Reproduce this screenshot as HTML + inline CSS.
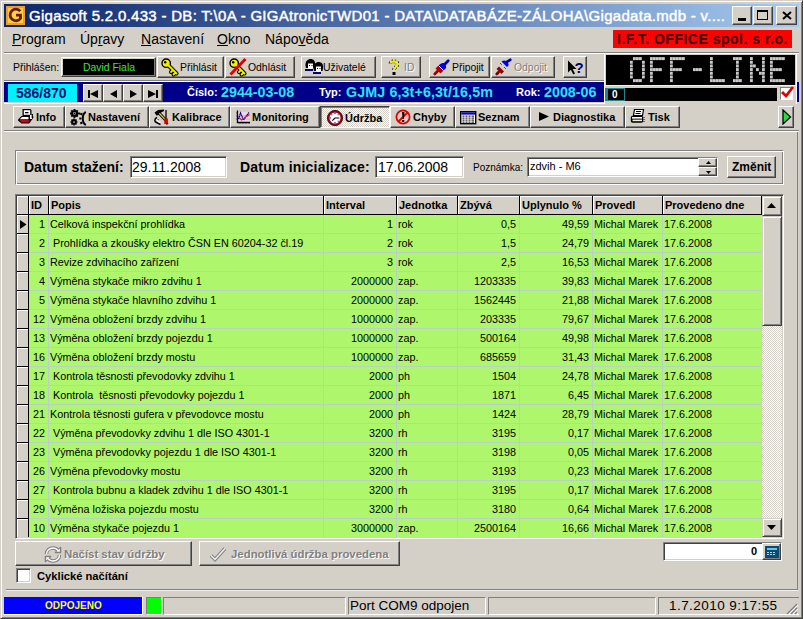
<!DOCTYPE html>
<html><head><meta charset="utf-8">
<style>
*{box-sizing:border-box;margin:0;padding:0}
html,body{width:803px;height:619px;overflow:hidden;background:#D4D0C8;font-family:"Liberation Sans",sans-serif;font-size:11px;color:#000}
.a{position:absolute}
svg.a{overflow:visible}
.r{position:absolute;background:#D4D0C8;border:1px solid;border-color:#fff #404040 #404040 #fff;box-shadow:inset -1px -1px #808080}
.s{position:absolute;background:#fff;border:1px solid;border-color:#808080 #fff #fff #808080;box-shadow:inset 1px 1px #404040,inset -1px -1px #D4D0C8}
.t{position:absolute;white-space:nowrap;line-height:1}
.b{font-weight:bold}
.tb{font-size:10.4px;top:63px}
.dis{color:#808080;text-shadow:1px 1px #fff}
.tab{position:absolute;top:106px;height:22px;background:#D4D0C8;border:1px solid;border-color:#fff #404040 #404040 #fff;box-shadow:inset -1px -1px #808080}
.tab span{position:absolute;top:5px;font-weight:bold;font-size:11px;white-space:nowrap;line-height:1}
.tab svg{position:absolute}
.sp{position:absolute;top:597px;height:17px;border:1px solid;border-color:#808080 #fff #fff #808080}
</style></head><body>
<!-- window frame -->
<div class="a" style="left:0;top:0;width:803px;height:619px;border:1px solid;border-color:#D4D0C8 #404040 #404040 #D4D0C8;box-shadow:inset 1px 1px #fff,inset -1px -1px #808080"></div>
<!-- title bar -->
<div class="a" style="left:4px;top:4px;width:795px;height:23px;background:linear-gradient(to right,#0A246A,#A6CAF0)"></div>
<svg class="a" style="left:5px;top:5px" width="21" height="21" viewBox="0 0 21 21">
<rect x="0.5" y="0.5" width="20" height="20" fill="#F39A2A" stroke="#5A1208"/>
<rect x="3" y="3" width="15" height="15" fill="#FFD040"/>
<path d="M15.3 6.2 A5.8 5.8 0 1 0 15.5 13.5 L15.5 10.2 L11 10.2" fill="none" stroke="#6A1A10" stroke-width="2.8"/>
</svg>
<div class="t" style="left:29px;top:8px;font-size:15px;letter-spacing:.3px;-webkit-text-stroke:.45px #fff;color:#fff">Gigasoft 5.2.0.433 - DB: T:\0A - GIGAtronicTWD01 - DATA\DATABÁZE-ZÁLOHA\Gigadata.mdb - v....</div>
<div class="r" style="left:732px;top:6px;width:20px;height:19px"><div class="a" style="left:5px;top:11px;width:8px;height:3px;background:#000"></div></div>
<div class="r" style="left:753px;top:6px;width:20px;height:19px"><div class="a" style="left:3px;top:3px;width:11px;height:10px;border:1px solid #000;border-top-width:2px"></div></div>
<div class="r" style="left:776px;top:6px;width:21px;height:19px"><svg class="a" style="left:5px;top:4px" width="10" height="9"><path d="M1 1L9 8M9 1L1 8" stroke="#000" stroke-width="2"/></svg></div>

<!-- menu -->
<div class="t" style="left:12px;top:32px;font-size:14px"><u>P</u>rogram</div>
<div class="t" style="left:80px;top:32px;font-size:14px">Úp<u>r</u>avy</div>
<div class="t" style="left:141px;top:32px;font-size:14px"><u>N</u>astavení</div>
<div class="t" style="left:217px;top:32px;font-size:14px"><u>O</u>kno</div>
<div class="t" style="left:265px;top:32px;font-size:14px">Nápo<u>v</u>ěda</div>
<div class="a" style="left:613px;top:30px;width:179px;height:18px;background:#FF0000"></div>
<div class="t b" style="left:617px;top:32px;font-size:14px;letter-spacing:.5px;color:#3A0000">I.F.T. OFFICE spol. s r.o.</div>
<div class="a" style="left:4px;top:52px;width:795px;height:1px;background:#808080"></div>
<div class="a" style="left:4px;top:53px;width:795px;height:1px;background:#fff"></div>

<!-- toolbar row -->
<div class="t tb" style="left:13px">Přihlášen:</div>
<div class="a" style="left:61px;top:57px;width:95px;height:20px;border:1px solid;border-color:#fff #404040 #404040 #fff;box-shadow:inset -1px -1px #808080,inset 1px 1px #D4D0C8;background:#000"></div>
<div class="t tb" style="left:83px;color:#40E040">David Fiala</div>

<div class="r" style="left:157px;top:56px;width:67px;height:22px"></div>
<svg class="a" style="left:161px;top:58px" width="18" height="17"><g stroke-linecap="round" stroke-linejoin="round"><path d="M6 6L15.5 15.5M12 12L10 14M14.5 14.5L12.5 16.5" stroke="#000" stroke-width="4"/><circle cx="5.2" cy="5.2" r="4.2" fill="#F0F000" stroke="#000" stroke-width="1.4"/><path d="M6 6L15.5 15.5M12 12L10 14M14.5 14.5L12.5 16.5" stroke="#F0F000" stroke-width="1.8"/><circle cx="4.2" cy="4.2" r="1.2" fill="#000"/></g></svg>
<div class="t tb" style="left:180px">Přihlásit</div>
<div class="r" style="left:225px;top:56px;width:70px;height:22px"></div>
<svg class="a" style="left:229px;top:58px" width="18" height="17"><g stroke-linecap="round" stroke-linejoin="round"><path d="M6 6L15.5 15.5M12 12L10 14M14.5 14.5L12.5 16.5" stroke="#000" stroke-width="4"/><circle cx="5.2" cy="5.2" r="4.2" fill="#F0F000" stroke="#000" stroke-width="1.4"/><path d="M6 6L15.5 15.5M12 12L10 14M14.5 14.5L12.5 16.5" stroke="#F0F000" stroke-width="1.8"/><circle cx="4.2" cy="4.2" r="1.2" fill="#000"/></g><path d="M16.5 1L1.5 16.5" stroke="#E00000" stroke-width="3"/></svg>
<div class="t tb" style="left:248px">Odhlásit</div>
<div class="r" style="left:301px;top:56px;width:75px;height:22px"></div>
<svg class="a" style="left:305px;top:59px" width="18" height="16"><g><path d="M0.5 7C0 2 3 0 5.5 0C8.5 0 10.5 2 10 6L9.5 9H1Z" fill="#000"/><path d="M3 4.5H8V8.5L6.5 10H4L3 9Z" fill="#fff"/><rect x="4" y="6" width="1" height="1" fill="#000"/><rect x="6.5" y="6" width="1" height="1" fill="#000"/><rect x="0" y="10" width="8" height="2" fill="#000070"/></g><g transform="translate(8 3)"><path d="M0.5 7C0 2 3 0 5.5 0C8.5 0 10.5 2 10 6L9.5 9H1Z" fill="#000"/><path d="M3 4.5H8V8.5L6.5 10H4L3 9Z" fill="#fff"/><rect x="4" y="6" width="1" height="1" fill="#000"/><rect x="6.5" y="6" width="1" height="1" fill="#000"/><rect x="0" y="10" width="8" height="2" fill="#000070"/></g></svg>
<div class="t tb" style="left:323px">Uživatelé</div>
<div class="r" style="left:381px;top:56px;width:40px;height:22px"></div>
<svg class="a" style="left:388px;top:59px" width="12" height="17"><path d="M2.5 4.5C2.5 1.5 9.5 1.5 9.5 5C9.5 8 6 8 6 11" fill="none" stroke="#000" stroke-width="3.6" stroke-dasharray="1.2 1.3"/><path d="M2.5 4.5C2.5 1.5 9.5 1.5 9.5 5C9.5 8 6 8 6 11" fill="none" stroke="#F0F000" stroke-width="2.2"/><rect x="4.5" y="13" width="3" height="3" fill="#000"/></svg>
<div class="t tb dis" style="left:404px">ID</div>
<div class="r" style="left:429px;top:56px;width:61px;height:22px"></div>
<svg class="a" style="left:433px;top:59px" width="17" height="17"><path d="M1.8 15L5 11.8" stroke="#A00000" stroke-width="2.8" stroke-linecap="round"/><path d="M2.5 9.5L7.5 14.5L10.5 11.5L5.5 6.5Z" fill="#B00000"/><path d="M5.5 6.5L10.5 11.5L12.8 9.2C13.8 7.8 12.5 5 11 4.3C9.5 3.3 7.8 4.2 5.5 6.5Z" fill="#0000F0"/><path d="M5.5 6.5L10.5 11.5" stroke="#fff" stroke-width=".9"/><path d="M11.8 5.2L15.2 1.8" stroke="#0000B0" stroke-width="2.8" stroke-linecap="round"/></svg>
<div class="t tb" style="left:452px">Připojit</div>
<div class="r" style="left:491px;top:56px;width:64px;height:22px"></div>
<svg class="a" style="left:495px;top:59px" width="17" height="17"><path d="M1.8 15L3.5 13.3" stroke="#800000" stroke-width="2.8" stroke-linecap="round"/><path d="M1.5 10L6.5 15L9 12.5L4 7.5Z" fill="#900000"/><path d="M6.5 2.5L12 8L13.3 6.7C14.2 5.3 13 3 11.5 2.2C10 1.3 8.3 1.2 6.5 2.5Z" fill="#0000F0"/><path d="M12.3 2.7L15.2 0.8" stroke="#0000B0" stroke-width="2.8" stroke-linecap="round"/><path d="M5 4L7 6M9 8L11 10" stroke="#0000F0" stroke-width="1" stroke-dasharray="1 1"/></svg>
<div class="t tb dis" style="left:514px">Odpojit</div>
<div class="r" style="left:563px;top:56px;width:24px;height:22px"></div>
<svg class="a" style="left:567px;top:60px" width="18" height="16"><path d="M1 0.5V12.5L3.8 9.8L6.3 14.5L8 13.6L5.6 9H9.5Z" fill="#000"/><text x="7.5" y="13" font-family="Liberation Sans" font-weight="bold" font-size="15" fill="#000070">?</text></svg>

<!-- OFF-LINE display -->
<div class="a" style="left:604px;top:54px;width:193px;height:50px;background:#D4D0C8;border-left:1px solid #fff;border-right:1px solid #fff"></div>
<div class="a" style="left:606px;top:55px;width:189px;height:30px;background:#000"></div>
<div class="a" style="left:605px;top:85px;width:191px;height:1px;background:#F0F0F0"></div>
<svg class="a" style="left:605px;top:54px" width="191" height="31"><rect x="28" y="3.10" width="2.8" height="3" fill="#C8C8C8"/><rect x="31" y="3.10" width="2.8" height="3" fill="#C8C8C8"/><rect x="34" y="3.10" width="2.8" height="3" fill="#C8C8C8"/><rect x="25" y="6.77" width="2.8" height="3" fill="#C8C8C8"/><rect x="37" y="6.77" width="2.8" height="3" fill="#C8C8C8"/><rect x="25" y="10.44" width="2.8" height="3" fill="#C8C8C8"/><rect x="37" y="10.44" width="2.8" height="3" fill="#C8C8C8"/><rect x="25" y="14.11" width="2.8" height="3" fill="#C8C8C8"/><rect x="37" y="14.11" width="2.8" height="3" fill="#C8C8C8"/><rect x="25" y="17.78" width="2.8" height="3" fill="#C8C8C8"/><rect x="37" y="17.78" width="2.8" height="3" fill="#C8C8C8"/><rect x="25" y="21.45" width="2.8" height="3" fill="#C8C8C8"/><rect x="37" y="21.45" width="2.8" height="3" fill="#C8C8C8"/><rect x="28" y="25.12" width="2.8" height="3" fill="#C8C8C8"/><rect x="31" y="25.12" width="2.8" height="3" fill="#C8C8C8"/><rect x="34" y="25.12" width="2.8" height="3" fill="#C8C8C8"/><rect x="45" y="3.10" width="2.8" height="3" fill="#C8C8C8"/><rect x="48" y="3.10" width="2.8" height="3" fill="#C8C8C8"/><rect x="51" y="3.10" width="2.8" height="3" fill="#C8C8C8"/><rect x="54" y="3.10" width="2.8" height="3" fill="#C8C8C8"/><rect x="57" y="3.10" width="2.8" height="3" fill="#C8C8C8"/><rect x="45" y="6.77" width="2.8" height="3" fill="#C8C8C8"/><rect x="45" y="10.44" width="2.8" height="3" fill="#C8C8C8"/><rect x="45" y="14.11" width="2.8" height="3" fill="#C8C8C8"/><rect x="48" y="14.11" width="2.8" height="3" fill="#C8C8C8"/><rect x="51" y="14.11" width="2.8" height="3" fill="#C8C8C8"/><rect x="54" y="14.11" width="2.8" height="3" fill="#C8C8C8"/><rect x="45" y="17.78" width="2.8" height="3" fill="#C8C8C8"/><rect x="45" y="21.45" width="2.8" height="3" fill="#C8C8C8"/><rect x="45" y="25.12" width="2.8" height="3" fill="#C8C8C8"/><rect x="65" y="3.10" width="2.8" height="3" fill="#C8C8C8"/><rect x="68" y="3.10" width="2.8" height="3" fill="#C8C8C8"/><rect x="71" y="3.10" width="2.8" height="3" fill="#C8C8C8"/><rect x="74" y="3.10" width="2.8" height="3" fill="#C8C8C8"/><rect x="77" y="3.10" width="2.8" height="3" fill="#C8C8C8"/><rect x="65" y="6.77" width="2.8" height="3" fill="#C8C8C8"/><rect x="65" y="10.44" width="2.8" height="3" fill="#C8C8C8"/><rect x="65" y="14.11" width="2.8" height="3" fill="#C8C8C8"/><rect x="68" y="14.11" width="2.8" height="3" fill="#C8C8C8"/><rect x="71" y="14.11" width="2.8" height="3" fill="#C8C8C8"/><rect x="74" y="14.11" width="2.8" height="3" fill="#C8C8C8"/><rect x="65" y="17.78" width="2.8" height="3" fill="#C8C8C8"/><rect x="65" y="21.45" width="2.8" height="3" fill="#C8C8C8"/><rect x="65" y="25.12" width="2.8" height="3" fill="#C8C8C8"/><rect x="88" y="14.11" width="2.8" height="3" fill="#C8C8C8"/><rect x="91" y="14.11" width="2.8" height="3" fill="#C8C8C8"/><rect x="94" y="14.11" width="2.8" height="3" fill="#C8C8C8"/><rect x="105" y="3.10" width="2.8" height="3" fill="#C8C8C8"/><rect x="105" y="6.77" width="2.8" height="3" fill="#C8C8C8"/><rect x="105" y="10.44" width="2.8" height="3" fill="#C8C8C8"/><rect x="105" y="14.11" width="2.8" height="3" fill="#C8C8C8"/><rect x="105" y="17.78" width="2.8" height="3" fill="#C8C8C8"/><rect x="105" y="21.45" width="2.8" height="3" fill="#C8C8C8"/><rect x="105" y="25.12" width="2.8" height="3" fill="#C8C8C8"/><rect x="108" y="25.12" width="2.8" height="3" fill="#C8C8C8"/><rect x="111" y="25.12" width="2.8" height="3" fill="#C8C8C8"/><rect x="114" y="25.12" width="2.8" height="3" fill="#C8C8C8"/><rect x="117" y="25.12" width="2.8" height="3" fill="#C8C8C8"/><rect x="128" y="3.10" width="2.8" height="3" fill="#C8C8C8"/><rect x="131" y="3.10" width="2.8" height="3" fill="#C8C8C8"/><rect x="134" y="3.10" width="2.8" height="3" fill="#C8C8C8"/><rect x="131" y="6.77" width="2.8" height="3" fill="#C8C8C8"/><rect x="131" y="10.44" width="2.8" height="3" fill="#C8C8C8"/><rect x="131" y="14.11" width="2.8" height="3" fill="#C8C8C8"/><rect x="131" y="17.78" width="2.8" height="3" fill="#C8C8C8"/><rect x="131" y="21.45" width="2.8" height="3" fill="#C8C8C8"/><rect x="128" y="25.12" width="2.8" height="3" fill="#C8C8C8"/><rect x="131" y="25.12" width="2.8" height="3" fill="#C8C8C8"/><rect x="134" y="25.12" width="2.8" height="3" fill="#C8C8C8"/><rect x="145" y="3.10" width="2.8" height="3" fill="#C8C8C8"/><rect x="157" y="3.10" width="2.8" height="3" fill="#C8C8C8"/><rect x="145" y="6.77" width="2.8" height="3" fill="#C8C8C8"/><rect x="157" y="6.77" width="2.8" height="3" fill="#C8C8C8"/><rect x="145" y="10.44" width="2.8" height="3" fill="#C8C8C8"/><rect x="148" y="10.44" width="2.8" height="3" fill="#C8C8C8"/><rect x="157" y="10.44" width="2.8" height="3" fill="#C8C8C8"/><rect x="145" y="14.11" width="2.8" height="3" fill="#C8C8C8"/><rect x="151" y="14.11" width="2.8" height="3" fill="#C8C8C8"/><rect x="157" y="14.11" width="2.8" height="3" fill="#C8C8C8"/><rect x="145" y="17.78" width="2.8" height="3" fill="#C8C8C8"/><rect x="154" y="17.78" width="2.8" height="3" fill="#C8C8C8"/><rect x="157" y="17.78" width="2.8" height="3" fill="#C8C8C8"/><rect x="145" y="21.45" width="2.8" height="3" fill="#C8C8C8"/><rect x="157" y="21.45" width="2.8" height="3" fill="#C8C8C8"/><rect x="145" y="25.12" width="2.8" height="3" fill="#C8C8C8"/><rect x="157" y="25.12" width="2.8" height="3" fill="#C8C8C8"/><rect x="165" y="3.10" width="2.8" height="3" fill="#C8C8C8"/><rect x="168" y="3.10" width="2.8" height="3" fill="#C8C8C8"/><rect x="171" y="3.10" width="2.8" height="3" fill="#C8C8C8"/><rect x="174" y="3.10" width="2.8" height="3" fill="#C8C8C8"/><rect x="177" y="3.10" width="2.8" height="3" fill="#C8C8C8"/><rect x="165" y="6.77" width="2.8" height="3" fill="#C8C8C8"/><rect x="165" y="10.44" width="2.8" height="3" fill="#C8C8C8"/><rect x="165" y="14.11" width="2.8" height="3" fill="#C8C8C8"/><rect x="168" y="14.11" width="2.8" height="3" fill="#C8C8C8"/><rect x="171" y="14.11" width="2.8" height="3" fill="#C8C8C8"/><rect x="174" y="14.11" width="2.8" height="3" fill="#C8C8C8"/><rect x="165" y="17.78" width="2.8" height="3" fill="#C8C8C8"/><rect x="165" y="21.45" width="2.8" height="3" fill="#C8C8C8"/><rect x="165" y="25.12" width="2.8" height="3" fill="#C8C8C8"/><rect x="168" y="25.12" width="2.8" height="3" fill="#C8C8C8"/><rect x="171" y="25.12" width="2.8" height="3" fill="#C8C8C8"/><rect x="174" y="25.12" width="2.8" height="3" fill="#C8C8C8"/><rect x="177" y="25.12" width="2.8" height="3" fill="#C8C8C8"/></svg>

<!-- blue bar -->
<div class="a" style="left:4px;top:80px;width:600px;height:1px;background:#808080"></div>
<div class="a" style="left:4px;top:81px;width:600px;height:1px;background:#fff"></div>
<div class="a" style="left:4px;top:82px;width:600px;height:20px;background:#000088"></div>
<div class="a" style="left:4px;top:103px;width:600px;height:1px;background:#fff"></div>
<div class="a" style="left:797px;top:82px;width:2px;height:20px;background:#000088"></div>
<div class="a" style="left:8px;top:84px;width:69px;height:18px;background:#00F0FF"></div>
<div class="t b" style="left:16px;top:86px;font-size:14px;color:#001070">586/870</div>
<div class="r" style="left:83px;top:84px;width:20px;height:18px"><svg class="a" style="left:4px;top:5px" width="11" height="8"><rect x="0" y="0" width="2" height="8"/><path d="M2 4L10 0V8Z"/></svg></div>
<div class="r" style="left:103px;top:84px;width:20px;height:18px"><svg class="a" style="left:6px;top:5px" width="8" height="8"><path d="M0 4L7 0V8Z"/></svg></div>
<div class="r" style="left:123px;top:84px;width:20px;height:18px"><svg class="a" style="left:6px;top:5px" width="8" height="8"><path d="M7 4L0 0V8Z"/></svg></div>
<div class="r" style="left:143px;top:84px;width:20px;height:18px"><svg class="a" style="left:4px;top:5px" width="11" height="8"><rect x="8" y="0" width="2" height="8"/><path d="M8 4L0 0V8Z"/></svg></div>
<div class="t b" style="left:187px;top:87px;font-size:11px;color:#fff">Číslo:</div>
<div class="t b" style="left:221px;top:85px;font-size:14.3px;color:#30E0FF">2944-03-08</div>
<div class="t b" style="left:319px;top:87px;font-size:11px;color:#fff">Typ:</div>
<div class="t b" style="left:346px;top:85px;font-size:14.3px;letter-spacing:.1px;color:#30E0FF">GJMJ 6,3t+6,3t/16,5m</div>
<div class="t b" style="left:516px;top:87px;font-size:11px;color:#fff">Rok:</div>
<div class="t b" style="left:544px;top:85px;font-size:14.3px;color:#30E0FF">2008-06</div>
<div class="a" style="left:605px;top:88px;width:172px;height:13px;background:#000"></div>
<div class="a" style="left:605px;top:88px;width:20px;height:13px;border:1px solid #208888;border-left-width:3px"></div>
<div class="t b" style="left:612px;top:90px;font-size:10px;color:#fff">0</div>
<div class="a" style="left:780px;top:87px;width:13px;height:13px;background:#fff;border:1px solid;border-color:#808080 #fff #fff #808080"></div>
<svg class="a" style="left:781px;top:86px" width="13" height="13"><path d="M1 6L5 10L12 1" fill="none" stroke="#E00000" stroke-width="2.8"/></svg>

<!-- tabs -->
<div class="tab" style="left:13px;width:52px"><svg style="left:4px;top:2px" width="17" height="16"><path d="M0 10.5L3.5 7H15L15.5 8.5L12 13.5L11 14.5H3.5L0 11.5Z" fill="#000"/><path d="M4 8H10.5V10.2H1.8Z" fill="#fff"/><path d="M1.5 11H11.5L10.3 13.5H3.5Z" fill="#C8001A"/><path d="M4.5 0H12.5L13.5 1.5V7H4.5Z" fill="#000"/><path d="M5.8 1.2H12.2V5.8H5.8Z" fill="#fff"/><rect x="7" y="3" width="3.5" height="1.3" fill="#000"/><path d="M12 6H14V10H12Z" fill="#fff"/><path d="M14.3 5V9" stroke="#000" stroke-width="1.3"/></svg><span style="left:22px">Info</span></div>
<div class="tab" style="left:65px;width:84px"><svg style="left:4px;top:2px" width="17" height="17"><g fill="none" stroke="#000"><circle cx="4.5" cy="4.5" r="2.5" stroke-width="2.2"/><path d="M4.5 0V1.5M4.5 7.5V9M0 4.5H1.5M7.5 4.5H10M1.3 1.3L2.3 2.3M6.7 6.7L7.7 7.7M7.7 1.3L6.7 2.3M2.3 6.7L1.3 7.7" stroke-width="1.9"/><path d="M15.8 3C11.8 5 11.8 14 15.8 16" stroke-width="2"/><path d="M12.3 5.5L10.3 4.5M11.5 9.5H9.3M12.3 13.5L10.3 14.5" stroke-width="2"/><circle cx="4" cy="13" r="1.8" stroke-width="1.9"/><path d="M4 9.5V10.8M4 15.2V16.5M0.5 13H1.8M6.2 13H7.5M1.5 10.5L2.3 11.3M5.7 14.7L6.5 15.5M6.5 10.5L5.7 11.3M2.3 14.7L1.5 15.5" stroke-width="1.7"/></g><circle cx="4.5" cy="4.5" r=".9" fill="#000"/></svg><span style="left:22px">Nastavení</span></div>
<div class="tab" style="left:149px;width:81px"><svg style="left:4px;top:2px" width="17" height="17"><path d="M0.5 3.5L4 1L10 0.5V2L7 3.5L5 6L2.5 6.5Z" fill="#000"/><path d="M5 4L12.5 12" stroke="#000" stroke-width="3.2"/><path d="M5.3 4.3L12.3 11.8" stroke="#C8C040" stroke-width="1.4"/><path d="M12 1V11" stroke="#000" stroke-width="1.3"/><rect x="10.3" y="9.5" width="3.6" height="5.5" fill="#E00000"/><path d="M12.5 15.5L14 14" stroke="#000" stroke-width="1.2"/><path d="M3 8.5C0.5 9.5 0 12.5 2.5 13.5L6.5 15.5M4.5 10.5L3 11.5" fill="none" stroke="#000" stroke-width="1.5"/><path d="M2.5 10.5L4.5 12.5L6.5 13.5" fill="none" stroke="#fff" stroke-width="1.2"/></svg><span style="left:22px">Kalibrace</span></div>
<div class="tab" style="left:230px;width:90px"><svg style="left:4px;top:2px" width="17" height="17"><rect x="3" y="3" width="12" height="10" fill="#F0D8E8"/><path d="M3 7H15M3 10H15" stroke="#B0A8B8" stroke-width=".8"/><path d="M2.5 1.5V13.5H15" fill="none" stroke="#000" stroke-width="1.3"/><path d="M1 4H2.5M1 7H2.5M1 10H2.5M5 14V15M8 14V15M11 14V15M14 14V15" stroke="#404040" stroke-width=".9"/><path d="M3.5 10L5.5 4L8.5 11L11 7.5L14 3.5" fill="none" stroke="#0000A0" stroke-width="1.3" stroke-dasharray="1.5 .5"/><path d="M3.5 8L6.5 11L10 8.5L14.5 5.5" fill="none" stroke="#C02040" stroke-width="1.1"/></svg><span style="left:21px">Monitoring</span></div>
<div class="a" style="left:320px;top:106px;width:70px;height:22px;background:repeating-conic-gradient(#fff 0 25%,#D4D0C8 0 50%) 0 0/2px 2px;border:1px solid;border-color:#404040 #fff #fff #404040;box-shadow:inset 1px 1px #808080"><svg class="a" style="left:6px;top:3px" width="16" height="16"><circle cx="8" cy="8" r="6.6" fill="#fff" stroke="#A00018" stroke-width="2.2"/><circle cx="8" cy="8" r="7.6" fill="none" stroke="#300000" stroke-width=".8"/><g fill="#000040"><rect x="7.5" y="2.6" width="1" height="1.4"/><rect x="2.7" y="7.5" width="1.2" height="1"/><rect x="7.5" y="12" width="1" height="1"/><rect x="4.3" y="4.3" width="1" height="1"/><rect x="10.7" y="4.3" width="1" height="1"/><rect x="10.7" y="10.7" width="1" height="1"/></g><path d="M12.3 8H8L5.3 10.7" fill="none" stroke="#000" stroke-width="1.1"/></svg><span class="t b" style="left:24px;top:6px;font-size:11px">Údržba</span></div>
<div class="tab" style="left:390px;width:65px"><svg style="left:4px;top:2px" width="17" height="17"><circle cx="8" cy="8" r="6.6" fill="none" stroke="#E00000" stroke-width="1.8"/><path d="M3.5 12.5L12.5 3.5" stroke="#E00000" stroke-width="1.8"/><path d="M7 3H9.5L8.8 10H7.7Z" fill="#000"/><rect x="7.2" y="11" width="2" height="2" fill="#000"/></svg><span style="left:22px">Chyby</span></div>
<div class="tab" style="left:455px;width:75px"><svg style="left:4px;top:4px" width="17" height="14"><rect x="0.7" y="0.7" width="15" height="12" fill="#fff" stroke="#000" stroke-width="1.4"/><rect x="1.4" y="1.4" width="13.6" height="2.2" fill="#0000C0"/><g fill="#000"><rect x="2.5" y="4.6" width="2" height="1"/><rect x="5.5" y="4.6" width="2" height="1"/><rect x="8.5" y="4.6" width="2" height="1"/><rect x="11.5" y="4.6" width="2.5" height="1"/><rect x="2.5" y="6.6" width="2" height="1"/><rect x="5.5" y="6.6" width="2" height="1"/><rect x="8.5" y="6.6" width="2" height="1"/><rect x="11.5" y="6.6" width="2.5" height="1"/><rect x="2.5" y="8.6" width="2" height="1"/><rect x="5.5" y="8.6" width="2" height="1"/><rect x="8.5" y="8.6" width="2" height="1"/><rect x="11.5" y="8.6" width="2.5" height="1"/><rect x="2.5" y="10.6" width="2" height="1"/><rect x="5.5" y="10.6" width="2" height="1"/><rect x="8.5" y="10.6" width="2" height="1"/><rect x="11.5" y="10.6" width="2.5" height="1"/></g></svg><span style="left:22px">Seznam</span></div>
<div class="tab" style="left:530px;width:95px"><svg style="left:8px;top:5px" width="11" height="10"><path d="M0 0L10 4.5L0 9Z" fill="#000"/></svg><span style="left:22px">Diagnostika</span></div>
<div class="tab" style="left:625px;width:55px"><svg style="left:4px;top:2px" width="17" height="16"><path d="M4.5 0.5H13.5L12.5 6.5H3.5Z" fill="#fff" stroke="#000" stroke-width="1.2"/><rect x="6" y="2" width="5" height="1" fill="#000"/><rect x="5.5" y="4" width="5" height="1" fill="#000"/><rect x="0.8" y="6.8" width="12.4" height="7" rx="1.8" fill="#000"/><rect x="2" y="8" width="10" height="1.6" fill="#fff"/><rect x="2.5" y="10.6" width="9.5" height="1.6" fill="#F0F0D0"/><path d="M14 8V9M14 10V11M14 12V13" stroke="#000" stroke-width="1"/></svg><span style="left:22px">Tisk</span></div>
<div class="tab" style="left:778px;width:16px"><svg style="left:3px;top:2px" width="10" height="16"><path d="M1 1L8.5 8L1 15Z" fill="#20E040" stroke="#000" stroke-width="1.3"/></svg></div>

<!-- separators main panel -->
<div class="a" style="left:4px;top:130px;width:795px;height:1px;background:#808080"></div>
<div class="a" style="left:4px;top:131px;width:795px;height:1px;background:#fff"></div>
<div class="a" style="left:797px;top:132px;width:1px;height:458px;background:#808080"></div>
<div class="a" style="left:6px;top:589px;width:792px;height:1px;background:#808080"></div>
<div class="a" style="left:6px;top:590px;width:792px;height:1px;background:#F0F0F0"></div>

<!-- group box -->
<div class="a" style="left:15px;top:150px;width:769px;height:35px;border:1px solid;border-color:#808080 #fff #fff #808080;box-shadow:inset 1px 1px #fff,inset -1px -1px #808080"></div>
<div class="t b" style="left:24px;top:160px;font-size:14px">Datum stažení:</div>
<div class="s" style="left:130px;top:156px;width:97px;height:22px"></div>
<div class="t" style="left:132px;top:160px;font-size:14px">29.11.2008</div>
<div class="t b" style="left:240px;top:160px;font-size:14px;letter-spacing:.2px">Datum inicializace:</div>
<div class="s" style="left:375px;top:156px;width:89px;height:22px"></div>
<div class="t" style="left:378px;top:160px;font-size:14px">17.06.2008</div>
<div class="t" style="left:473px;top:163px;font-size:10px">Poznámka:</div>
<div class="s" style="left:527px;top:157px;width:191px;height:20px"></div>
<div class="t" style="left:530px;top:161px;font-size:11px">zdvih - M6</div>
<div class="r" style="left:698px;top:158px;width:19px;height:9px"><svg class="a" style="left:7px;top:2px" width="5" height="3"><path d="M0 3H5L2.5 0Z"/></svg></div>
<div class="r" style="left:698px;top:167px;width:19px;height:9px"><svg class="a" style="left:7px;top:3px" width="5" height="3"><path d="M0 0H5L2.5 3Z"/></svg></div>
<div class="r" style="left:727px;top:156px;width:49px;height:22px"></div>
<div class="t b" style="left:732px;top:161px;font-size:12px">Změnit</div>

<!-- grid -->
<div class="a" style="left:17px;top:196px;width:12px;height:19px;background:#D4D0C8;border-right:1px solid #000;border-bottom:1px solid #000;box-shadow:inset 1px 1px #fff"></div>
<div class="a" style="left:29px;top:196px;width:20px;height:19px;background:#D4D0C8;border-right:1px solid #000;border-bottom:1px solid #000;box-shadow:inset 1px 1px #fff"></div>
<div class="t b" style="left:31px;top:200px;font-size:11px">ID</div>
<div class="a" style="left:49px;top:196px;width:275px;height:19px;background:#D4D0C8;border-right:1px solid #000;border-bottom:1px solid #000;box-shadow:inset 1px 1px #fff"></div>
<div class="t b" style="left:51px;top:200px;font-size:11px">Popis</div>
<div class="a" style="left:324px;top:196px;width:73px;height:19px;background:#D4D0C8;border-right:1px solid #000;border-bottom:1px solid #000;box-shadow:inset 1px 1px #fff"></div>
<div class="t b" style="left:326px;top:200px;font-size:11px">Interval</div>
<div class="a" style="left:397px;top:196px;width:61px;height:19px;background:#D4D0C8;border-right:1px solid #000;border-bottom:1px solid #000;box-shadow:inset 1px 1px #fff"></div>
<div class="t b" style="left:399px;top:200px;font-size:11px">Jednotka</div>
<div class="a" style="left:458px;top:196px;width:62px;height:19px;background:#D4D0C8;border-right:1px solid #000;border-bottom:1px solid #000;box-shadow:inset 1px 1px #fff"></div>
<div class="t b" style="left:460px;top:200px;font-size:11px">Zbývá</div>
<div class="a" style="left:520px;top:196px;width:73px;height:19px;background:#D4D0C8;border-right:1px solid #000;border-bottom:1px solid #000;box-shadow:inset 1px 1px #fff"></div>
<div class="t b" style="left:522px;top:200px;font-size:11px">Uplynulo %</div>
<div class="a" style="left:593px;top:196px;width:70px;height:19px;background:#D4D0C8;border-right:1px solid #000;border-bottom:1px solid #000;box-shadow:inset 1px 1px #fff"></div>
<div class="t b" style="left:595px;top:200px;font-size:11px">Provedl</div>
<div class="a" style="left:663px;top:196px;width:99px;height:19px;background:#D4D0C8;border-right:1px solid #000;border-bottom:1px solid #000;box-shadow:inset 1px 1px #fff"></div>
<div class="t b" style="left:665px;top:200px;font-size:11px">Provedeno dne</div>
<div class="a" style="left:29px;top:215px;width:733px;height:322px;background:#AEF66C"></div>
<div class="a" style="left:17px;top:215px;width:12px;height:19px;background:#D4D0C8;border-right:1px solid #000;border-bottom:1px solid #000;box-shadow:inset 1px 1px #fff"></div>
<div class="a" style="left:29px;top:233px;width:733px;height:1px;background:#B8D0C8"></div>
<div class="t" style="left:28px;width:17px;text-align:right;top:219px;font-size:10.8px">1</div>
<div class="t" style="left:50px;top:219px;font-size:10.8px">Celková inspekční prohlídka</div>
<div class="t" style="left:323px;width:70px;text-align:right;top:219px;font-size:10.8px">1</div>
<div class="t" style="left:398px;top:219px;font-size:10.8px">rok</div>
<div class="t" style="left:457px;width:59px;text-align:right;top:219px;font-size:10.8px">0,5</div>
<div class="t" style="left:519px;width:70px;text-align:right;top:219px;font-size:10.8px">49,59</div>
<div class="t" style="left:594px;top:219px;font-size:10.8px">Michal Marek</div>
<div class="t" style="left:664px;top:219px;font-size:10.8px">17.6.2008</div>
<div class="a" style="left:17px;top:234px;width:12px;height:19px;background:#D4D0C8;border-right:1px solid #000;border-bottom:1px solid #000;box-shadow:inset 1px 1px #fff"></div>
<div class="a" style="left:29px;top:252px;width:733px;height:1px;background:#B8D0C8"></div>
<div class="t" style="left:28px;width:17px;text-align:right;top:238px;font-size:10.8px">2</div>
<div class="t" style="left:50px;top:238px;font-size:10.8px">&nbsp;Prohlídka a zkoušky elektro ČSN EN 60204-32 čl.19</div>
<div class="t" style="left:323px;width:70px;text-align:right;top:238px;font-size:10.8px">2</div>
<div class="t" style="left:398px;top:238px;font-size:10.8px">rok</div>
<div class="t" style="left:457px;width:59px;text-align:right;top:238px;font-size:10.8px">1,5</div>
<div class="t" style="left:519px;width:70px;text-align:right;top:238px;font-size:10.8px">24,79</div>
<div class="t" style="left:594px;top:238px;font-size:10.8px">Michal Marek</div>
<div class="t" style="left:664px;top:238px;font-size:10.8px">17.6.2008</div>
<div class="a" style="left:17px;top:253px;width:12px;height:19px;background:#D4D0C8;border-right:1px solid #000;border-bottom:1px solid #000;box-shadow:inset 1px 1px #fff"></div>
<div class="a" style="left:29px;top:271px;width:733px;height:1px;background:#B8D0C8"></div>
<div class="t" style="left:28px;width:17px;text-align:right;top:257px;font-size:10.8px">3</div>
<div class="t" style="left:50px;top:257px;font-size:10.8px">Revize zdvihacího zařízení</div>
<div class="t" style="left:323px;width:70px;text-align:right;top:257px;font-size:10.8px">3</div>
<div class="t" style="left:398px;top:257px;font-size:10.8px">rok</div>
<div class="t" style="left:457px;width:59px;text-align:right;top:257px;font-size:10.8px">2,5</div>
<div class="t" style="left:519px;width:70px;text-align:right;top:257px;font-size:10.8px">16,53</div>
<div class="t" style="left:594px;top:257px;font-size:10.8px">Michal Marek</div>
<div class="t" style="left:664px;top:257px;font-size:10.8px">17.6.2008</div>
<div class="a" style="left:17px;top:272px;width:12px;height:19px;background:#D4D0C8;border-right:1px solid #000;border-bottom:1px solid #000;box-shadow:inset 1px 1px #fff"></div>
<div class="a" style="left:29px;top:290px;width:733px;height:1px;background:#B8D0C8"></div>
<div class="t" style="left:28px;width:17px;text-align:right;top:276px;font-size:10.8px">4</div>
<div class="t" style="left:50px;top:276px;font-size:10.8px">Výměna stykače mikro zdvihu 1</div>
<div class="t" style="left:323px;width:70px;text-align:right;top:276px;font-size:10.8px">2000000</div>
<div class="t" style="left:398px;top:276px;font-size:10.8px">zap.</div>
<div class="t" style="left:457px;width:59px;text-align:right;top:276px;font-size:10.8px">1203335</div>
<div class="t" style="left:519px;width:70px;text-align:right;top:276px;font-size:10.8px">39,83</div>
<div class="t" style="left:594px;top:276px;font-size:10.8px">Michal Marek</div>
<div class="t" style="left:664px;top:276px;font-size:10.8px">17.6.2008</div>
<div class="a" style="left:17px;top:291px;width:12px;height:19px;background:#D4D0C8;border-right:1px solid #000;border-bottom:1px solid #000;box-shadow:inset 1px 1px #fff"></div>
<div class="a" style="left:29px;top:309px;width:733px;height:1px;background:#B8D0C8"></div>
<div class="t" style="left:28px;width:17px;text-align:right;top:295px;font-size:10.8px">5</div>
<div class="t" style="left:50px;top:295px;font-size:10.8px">Výměna stykače hlavního zdvihu 1</div>
<div class="t" style="left:323px;width:70px;text-align:right;top:295px;font-size:10.8px">2000000</div>
<div class="t" style="left:398px;top:295px;font-size:10.8px">zap.</div>
<div class="t" style="left:457px;width:59px;text-align:right;top:295px;font-size:10.8px">1562445</div>
<div class="t" style="left:519px;width:70px;text-align:right;top:295px;font-size:10.8px">21,88</div>
<div class="t" style="left:594px;top:295px;font-size:10.8px">Michal Marek</div>
<div class="t" style="left:664px;top:295px;font-size:10.8px">17.6.2008</div>
<div class="a" style="left:17px;top:310px;width:12px;height:19px;background:#D4D0C8;border-right:1px solid #000;border-bottom:1px solid #000;box-shadow:inset 1px 1px #fff"></div>
<div class="a" style="left:29px;top:328px;width:733px;height:1px;background:#B8D0C8"></div>
<div class="t" style="left:28px;width:17px;text-align:right;top:314px;font-size:10.8px">12</div>
<div class="t" style="left:50px;top:314px;font-size:10.8px">Výměna obložení brzdy zdvihu 1</div>
<div class="t" style="left:323px;width:70px;text-align:right;top:314px;font-size:10.8px">1000000</div>
<div class="t" style="left:398px;top:314px;font-size:10.8px">zap.</div>
<div class="t" style="left:457px;width:59px;text-align:right;top:314px;font-size:10.8px">203335</div>
<div class="t" style="left:519px;width:70px;text-align:right;top:314px;font-size:10.8px">79,67</div>
<div class="t" style="left:594px;top:314px;font-size:10.8px">Michal Marek</div>
<div class="t" style="left:664px;top:314px;font-size:10.8px">17.6.2008</div>
<div class="a" style="left:17px;top:329px;width:12px;height:19px;background:#D4D0C8;border-right:1px solid #000;border-bottom:1px solid #000;box-shadow:inset 1px 1px #fff"></div>
<div class="a" style="left:29px;top:347px;width:733px;height:1px;background:#B8D0C8"></div>
<div class="t" style="left:28px;width:17px;text-align:right;top:333px;font-size:10.8px">13</div>
<div class="t" style="left:50px;top:333px;font-size:10.8px">Výměna obložení brzdy pojezdu 1</div>
<div class="t" style="left:323px;width:70px;text-align:right;top:333px;font-size:10.8px">1000000</div>
<div class="t" style="left:398px;top:333px;font-size:10.8px">zap.</div>
<div class="t" style="left:457px;width:59px;text-align:right;top:333px;font-size:10.8px">500164</div>
<div class="t" style="left:519px;width:70px;text-align:right;top:333px;font-size:10.8px">49,98</div>
<div class="t" style="left:594px;top:333px;font-size:10.8px">Michal Marek</div>
<div class="t" style="left:664px;top:333px;font-size:10.8px">17.6.2008</div>
<div class="a" style="left:17px;top:348px;width:12px;height:19px;background:#D4D0C8;border-right:1px solid #000;border-bottom:1px solid #000;box-shadow:inset 1px 1px #fff"></div>
<div class="a" style="left:29px;top:366px;width:733px;height:1px;background:#B8D0C8"></div>
<div class="t" style="left:28px;width:17px;text-align:right;top:352px;font-size:10.8px">16</div>
<div class="t" style="left:50px;top:352px;font-size:10.8px">Výměna obložení brzdy mostu</div>
<div class="t" style="left:323px;width:70px;text-align:right;top:352px;font-size:10.8px">1000000</div>
<div class="t" style="left:398px;top:352px;font-size:10.8px">zap.</div>
<div class="t" style="left:457px;width:59px;text-align:right;top:352px;font-size:10.8px">685659</div>
<div class="t" style="left:519px;width:70px;text-align:right;top:352px;font-size:10.8px">31,43</div>
<div class="t" style="left:594px;top:352px;font-size:10.8px">Michal Marek</div>
<div class="t" style="left:664px;top:352px;font-size:10.8px">17.6.2008</div>
<div class="a" style="left:17px;top:367px;width:12px;height:19px;background:#D4D0C8;border-right:1px solid #000;border-bottom:1px solid #000;box-shadow:inset 1px 1px #fff"></div>
<div class="a" style="left:29px;top:385px;width:733px;height:1px;background:#B8D0C8"></div>
<div class="t" style="left:28px;width:17px;text-align:right;top:371px;font-size:10.8px">17</div>
<div class="t" style="left:50px;top:371px;font-size:10.8px">&nbsp;Kontrola těsnosti převodovky zdvihu 1</div>
<div class="t" style="left:323px;width:70px;text-align:right;top:371px;font-size:10.8px">2000</div>
<div class="t" style="left:398px;top:371px;font-size:10.8px">ph</div>
<div class="t" style="left:457px;width:59px;text-align:right;top:371px;font-size:10.8px">1504</div>
<div class="t" style="left:519px;width:70px;text-align:right;top:371px;font-size:10.8px">24,78</div>
<div class="t" style="left:594px;top:371px;font-size:10.8px">Michal Marek</div>
<div class="t" style="left:664px;top:371px;font-size:10.8px">17.6.2008</div>
<div class="a" style="left:17px;top:386px;width:12px;height:19px;background:#D4D0C8;border-right:1px solid #000;border-bottom:1px solid #000;box-shadow:inset 1px 1px #fff"></div>
<div class="a" style="left:29px;top:404px;width:733px;height:1px;background:#B8D0C8"></div>
<div class="t" style="left:28px;width:17px;text-align:right;top:390px;font-size:10.8px">18</div>
<div class="t" style="left:50px;top:390px;font-size:10.8px">&nbsp;Kontrola &nbsp;těsnosti převodovky pojezdu 1</div>
<div class="t" style="left:323px;width:70px;text-align:right;top:390px;font-size:10.8px">2000</div>
<div class="t" style="left:398px;top:390px;font-size:10.8px">ph</div>
<div class="t" style="left:457px;width:59px;text-align:right;top:390px;font-size:10.8px">1871</div>
<div class="t" style="left:519px;width:70px;text-align:right;top:390px;font-size:10.8px">6,45</div>
<div class="t" style="left:594px;top:390px;font-size:10.8px">Michal Marek</div>
<div class="t" style="left:664px;top:390px;font-size:10.8px">17.6.2008</div>
<div class="a" style="left:17px;top:405px;width:12px;height:19px;background:#D4D0C8;border-right:1px solid #000;border-bottom:1px solid #000;box-shadow:inset 1px 1px #fff"></div>
<div class="a" style="left:29px;top:423px;width:733px;height:1px;background:#B8D0C8"></div>
<div class="t" style="left:28px;width:17px;text-align:right;top:409px;font-size:10.8px">21</div>
<div class="t" style="left:50px;top:409px;font-size:10.8px">Kontrola těsnosti gufera v převodovce mostu</div>
<div class="t" style="left:323px;width:70px;text-align:right;top:409px;font-size:10.8px">2000</div>
<div class="t" style="left:398px;top:409px;font-size:10.8px">ph</div>
<div class="t" style="left:457px;width:59px;text-align:right;top:409px;font-size:10.8px">1424</div>
<div class="t" style="left:519px;width:70px;text-align:right;top:409px;font-size:10.8px">28,79</div>
<div class="t" style="left:594px;top:409px;font-size:10.8px">Michal Marek</div>
<div class="t" style="left:664px;top:409px;font-size:10.8px">17.6.2008</div>
<div class="a" style="left:17px;top:424px;width:12px;height:19px;background:#D4D0C8;border-right:1px solid #000;border-bottom:1px solid #000;box-shadow:inset 1px 1px #fff"></div>
<div class="a" style="left:29px;top:442px;width:733px;height:1px;background:#B8D0C8"></div>
<div class="t" style="left:28px;width:17px;text-align:right;top:428px;font-size:10.8px">22</div>
<div class="t" style="left:50px;top:428px;font-size:10.8px">&nbsp;Výměna převodovky zdvihu 1 dle ISO 4301-1</div>
<div class="t" style="left:323px;width:70px;text-align:right;top:428px;font-size:10.8px">3200</div>
<div class="t" style="left:398px;top:428px;font-size:10.8px">rh</div>
<div class="t" style="left:457px;width:59px;text-align:right;top:428px;font-size:10.8px">3195</div>
<div class="t" style="left:519px;width:70px;text-align:right;top:428px;font-size:10.8px">0,17</div>
<div class="t" style="left:594px;top:428px;font-size:10.8px">Michal Marek</div>
<div class="t" style="left:664px;top:428px;font-size:10.8px">17.6.2008</div>
<div class="a" style="left:17px;top:443px;width:12px;height:19px;background:#D4D0C8;border-right:1px solid #000;border-bottom:1px solid #000;box-shadow:inset 1px 1px #fff"></div>
<div class="a" style="left:29px;top:461px;width:733px;height:1px;background:#B8D0C8"></div>
<div class="t" style="left:28px;width:17px;text-align:right;top:447px;font-size:10.8px">23</div>
<div class="t" style="left:50px;top:447px;font-size:10.8px">&nbsp;Výměna převodovky pojezdu 1 dle ISO 4301-1</div>
<div class="t" style="left:323px;width:70px;text-align:right;top:447px;font-size:10.8px">3200</div>
<div class="t" style="left:398px;top:447px;font-size:10.8px">rh</div>
<div class="t" style="left:457px;width:59px;text-align:right;top:447px;font-size:10.8px">3198</div>
<div class="t" style="left:519px;width:70px;text-align:right;top:447px;font-size:10.8px">0,05</div>
<div class="t" style="left:594px;top:447px;font-size:10.8px">Michal Marek</div>
<div class="t" style="left:664px;top:447px;font-size:10.8px">17.6.2008</div>
<div class="a" style="left:17px;top:462px;width:12px;height:19px;background:#D4D0C8;border-right:1px solid #000;border-bottom:1px solid #000;box-shadow:inset 1px 1px #fff"></div>
<div class="a" style="left:29px;top:480px;width:733px;height:1px;background:#B8D0C8"></div>
<div class="t" style="left:28px;width:17px;text-align:right;top:466px;font-size:10.8px">26</div>
<div class="t" style="left:50px;top:466px;font-size:10.8px">Výměna převodovky mostu</div>
<div class="t" style="left:323px;width:70px;text-align:right;top:466px;font-size:10.8px">3200</div>
<div class="t" style="left:398px;top:466px;font-size:10.8px">rh</div>
<div class="t" style="left:457px;width:59px;text-align:right;top:466px;font-size:10.8px">3193</div>
<div class="t" style="left:519px;width:70px;text-align:right;top:466px;font-size:10.8px">0,23</div>
<div class="t" style="left:594px;top:466px;font-size:10.8px">Michal Marek</div>
<div class="t" style="left:664px;top:466px;font-size:10.8px">17.6.2008</div>
<div class="a" style="left:17px;top:481px;width:12px;height:19px;background:#D4D0C8;border-right:1px solid #000;border-bottom:1px solid #000;box-shadow:inset 1px 1px #fff"></div>
<div class="a" style="left:29px;top:499px;width:733px;height:1px;background:#B8D0C8"></div>
<div class="t" style="left:28px;width:17px;text-align:right;top:485px;font-size:10.8px">27</div>
<div class="t" style="left:50px;top:485px;font-size:10.8px">&nbsp;Kontrola bubnu a kladek zdvihu 1 dle ISO 4301-1</div>
<div class="t" style="left:323px;width:70px;text-align:right;top:485px;font-size:10.8px">3200</div>
<div class="t" style="left:398px;top:485px;font-size:10.8px">rh</div>
<div class="t" style="left:457px;width:59px;text-align:right;top:485px;font-size:10.8px">3195</div>
<div class="t" style="left:519px;width:70px;text-align:right;top:485px;font-size:10.8px">0,17</div>
<div class="t" style="left:594px;top:485px;font-size:10.8px">Michal Marek</div>
<div class="t" style="left:664px;top:485px;font-size:10.8px">17.6.2008</div>
<div class="a" style="left:17px;top:500px;width:12px;height:19px;background:#D4D0C8;border-right:1px solid #000;border-bottom:1px solid #000;box-shadow:inset 1px 1px #fff"></div>
<div class="a" style="left:29px;top:518px;width:733px;height:1px;background:#B8D0C8"></div>
<div class="t" style="left:28px;width:17px;text-align:right;top:504px;font-size:10.8px">29</div>
<div class="t" style="left:50px;top:504px;font-size:10.8px">Výměna ložiska pojezdu mostu</div>
<div class="t" style="left:323px;width:70px;text-align:right;top:504px;font-size:10.8px">3200</div>
<div class="t" style="left:398px;top:504px;font-size:10.8px">rh</div>
<div class="t" style="left:457px;width:59px;text-align:right;top:504px;font-size:10.8px">3180</div>
<div class="t" style="left:519px;width:70px;text-align:right;top:504px;font-size:10.8px">0,64</div>
<div class="t" style="left:594px;top:504px;font-size:10.8px">Michal Marek</div>
<div class="t" style="left:664px;top:504px;font-size:10.8px">17.6.2008</div>
<div class="a" style="left:17px;top:519px;width:12px;height:18px;background:#D4D0C8;border-right:1px solid #000;border-bottom:0;box-shadow:inset 1px 1px #fff"></div>
<div class="t" style="left:28px;width:17px;text-align:right;top:523px;font-size:10.8px">10</div>
<div class="t" style="left:50px;top:523px;font-size:10.8px">Výměna stykače pojezdu 1</div>
<div class="t" style="left:323px;width:70px;text-align:right;top:523px;font-size:10.8px">3000000</div>
<div class="t" style="left:398px;top:523px;font-size:10.8px">zap.</div>
<div class="t" style="left:457px;width:59px;text-align:right;top:523px;font-size:10.8px">2500164</div>
<div class="t" style="left:519px;width:70px;text-align:right;top:523px;font-size:10.8px">16,66</div>
<div class="t" style="left:594px;top:523px;font-size:10.8px">Michal Marek</div>
<div class="t" style="left:664px;top:523px;font-size:10.8px">17.6.2008</div>
<div class="a" style="left:48px;top:215px;width:1px;height:322px;background:#B8D0C8"></div>
<div class="a" style="left:323px;top:215px;width:1px;height:322px;background:#B8D0C8"></div>
<div class="a" style="left:396px;top:215px;width:1px;height:322px;background:#B8D0C8"></div>
<div class="a" style="left:457px;top:215px;width:1px;height:322px;background:#B8D0C8"></div>
<div class="a" style="left:519px;top:215px;width:1px;height:322px;background:#B8D0C8"></div>
<div class="a" style="left:592px;top:215px;width:1px;height:322px;background:#B8D0C8"></div>
<div class="a" style="left:662px;top:215px;width:1px;height:322px;background:#B8D0C8"></div>
<svg class="a" style="left:19px;top:219px" width="8" height="11"><path d="M1 1L7.5 5.5L1 10Z" fill="#000"/></svg>
<div class="a" style="left:762px;top:196px;width:20px;height:341px;background:repeating-conic-gradient(#fff 0 25%,#D4D0C8 0 50%) 0 0/2px 2px"></div>
<div class="a" style="background:#D4D0C8;border:1px solid;border-color:#D4D0C8 #404040 #404040 #D4D0C8;box-shadow:inset 1px 1px #fff,inset -1px -1px #808080;left:762px;top:196px;width:20px;height:20px"></div>
<svg class="a" style="left:767px;top:203px" width="9" height="6"><path d="M0 5H9L4.5 0Z" fill="#000"/></svg>
<div class="a" style="background:#D4D0C8;border:1px solid;border-color:#D4D0C8 #404040 #404040 #D4D0C8;box-shadow:inset 1px 1px #fff,inset -1px -1px #808080;left:762px;top:216px;width:20px;height:110px"></div>
<div class="a" style="background:#D4D0C8;border:1px solid;border-color:#D4D0C8 #404040 #404040 #D4D0C8;box-shadow:inset 1px 1px #fff,inset -1px -1px #808080;left:762px;top:518px;width:20px;height:19px"></div>
<svg class="a" style="left:767px;top:525px" width="9" height="6"><path d="M0 0H9L4.5 5Z" fill="#000"/></svg>
<div class="a" style="left:15px;top:194px;width:769px;height:345px;border:1px solid;border-color:#808080 #fff #fff #808080;box-shadow:inset 1px 1px #404040"></div>

<!-- bottom buttons -->
<div class="r" style="left:15px;top:541px;width:177px;height:25px"></div>
<svg class="a" style="left:44px;top:546px" width="18" height="17"><g stroke-linejoin="round"><path d="M2.5 8C2.5 4.5 5.5 2 9 2C11.5 2 13 3 14 4.5" fill="none" stroke="#808080" stroke-width="3.6"/><path d="M11.5 6.5H16.5V1.5Z" fill="#808080" stroke="#808080" stroke-width="1.6"/><path d="M15.5 9C15.5 12.5 12.5 15 9 15C6.5 15 5 14 4 12.5" fill="none" stroke="#808080" stroke-width="3.6"/><path d="M6.5 10.5H1.5V15.5Z" fill="#808080" stroke="#808080" stroke-width="1.6"/><path d="M2.5 8C2.5 4.5 5.5 2 9 2C11.5 2 13 3 14 4.5" fill="none" stroke="#fff" stroke-width="1.4"/><path d="M12.5 5.8H15.8V2.5Z" fill="#fff"/><path d="M15.5 9C15.5 12.5 12.5 15 9 15C6.5 15 5 14 4 12.5" fill="none" stroke="#fff" stroke-width="1.4"/><path d="M5.5 11.2H2.2V14.5Z" fill="#fff"/></g></svg>
<div class="t b dis" style="left:64px;top:549px;font-size:11.4px">Načíst stav údržby</div>
<div class="r" style="left:199px;top:541px;width:201px;height:25px"></div>
<svg class="a" style="left:209px;top:545px" width="18" height="18"><path d="M2 10.5L6 14.5L16 3.5" fill="none" stroke="#808080" stroke-width="3.4" stroke-linejoin="miter"/><path d="M2 10.5L6 14.5L16 3.5" fill="none" stroke="#F0F0F0" stroke-width="1.5" stroke-linejoin="miter"/></svg>
<div class="t b dis" style="left:231px;top:549px;font-size:11.4px">Jednotlivá údržba provedena</div>
<div class="s" style="left:663px;top:542px;width:119px;height:19px"></div>
<div class="t b" style="left:751px;top:546px;font-size:11px">0</div>
<div class="r" style="left:762px;top:543px;width:19px;height:17px"><svg class="a" style="left:2px;top:2px" width="14" height="12"><rect x="0" y="0" width="14" height="12" fill="#104870"/><rect x="2" y="2" width="10" height="2" fill="#60C8E8"/><g fill="#A0E0F0"><rect x="2" y="6" width="2" height="1"/><rect x="5" y="6" width="2" height="1"/><rect x="8" y="6" width="2" height="1"/><rect x="2" y="8" width="2" height="1"/><rect x="5" y="8" width="2" height="1"/><rect x="8" y="8" width="2" height="1"/></g></svg></div>
<div class="s" style="left:16px;top:568px;width:15px;height:15px"></div>
<div class="t b" style="left:37px;top:571px;font-size:11.2px">Cyklické načítání</div>

<!-- status bar -->
<div class="a" style="left:3px;top:596px;width:140px;height:19px;background:#0000FF;border:1px solid;border-color:#D4D0C8 #fff #fff #D4D0C8"></div>
<div class="t b" style="left:45px;top:601px;font-size:10px;color:#FFFF00">ODPOJENO</div>
<div class="a" style="left:146px;top:597px;width:16px;height:18px;background:#00FF00;border:1px solid;border-color:#808080 #fff #fff #808080"></div>
<div class="sp" style="left:163px;width:183px;height:18px"></div>
<div class="sp" style="left:348px;width:138px;height:18px"></div>
<div class="t" style="left:350px;top:599px;font-size:13.5px">Port COM9 odpojen</div>
<div class="sp" style="left:488px;width:168px;height:18px"></div>
<div class="sp" style="left:658px;width:141px;height:18px;border-right:0"></div>
<div class="t" style="left:669px;top:599px;font-size:13.5px;letter-spacing:.45px">1.7.2010 9:17:55</div>
<svg class="a" style="left:786px;top:603px" width="12" height="12"><path d="M11 1L1 11M11 5L5 11M11 9L9 11" stroke="#808080" stroke-width="1.2"/><path d="M12 2L2 12M12 6L6 12M12 10L10 12" stroke="#fff" stroke-width="1"/></svg>
</body></html>
